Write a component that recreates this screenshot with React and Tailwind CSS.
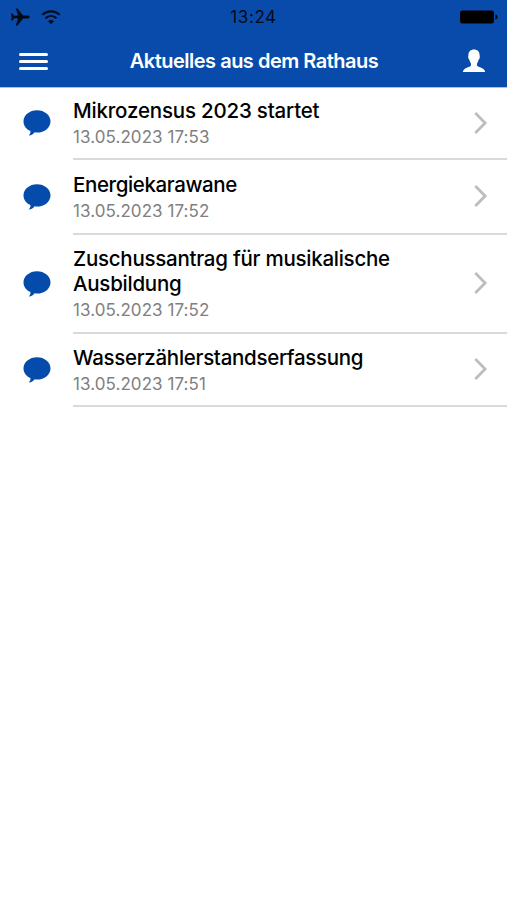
import React from 'react';

const messages = [
  { title: 'Mikrozensus 2023 startet', date: '13.05.2023 17:53', height: 'h-[72px]', spacing: 'tracking-[-0.19px]', padding: 'pt-[10px]' },
  { title: 'Energiekarawane', date: '13.05.2023 17:52', height: 'h-[75px]', spacing: 'tracking-[-0.39px]', padding: 'pt-[12px]' },
  { title: 'Zuschussantrag für musikalische Ausbildung', date: '13.05.2023 17:52', height: 'h-[99px]', spacing: 'tracking-[-0.25px]', padding: 'pt-[11px]' },
  { title: 'Wasserzählerstandserfassung', date: '13.05.2023 17:51', height: 'h-[73px]', spacing: 'tracking-[-0.3px]', padding: 'pt-[11px]' },
];

const PlaneIcon = () => (
  <svg className="w-[20px] h-[18px]" viewBox="0 0 20 18" fill="currentColor">
    <path d="M19.8 9c0-.9-1-1.500-2.500-1.500h-4.200L7.500.4H5.700l2.600 7.100-4.100.3L2.400 5.400H1L1.800 9 1 12.600h1.400l1.800-2.400 4.100.3-2.600 7.100h1.800l5.600-7.100h4.200c1.500 0 2.500-.6 2.500-1.500z" />
  </svg>
);

const WifiIcon = () => (
  <svg className="w-[20px] h-[15px]" viewBox="0 0 20 15" fill="none" stroke="currentColor" strokeWidth="2.2">
    <path d="M1.300 4.800C6.300.1 13.700.1 18.700 4.800" />
    <path d="M4.500 8.300c3.300-3.100 7.700-3.100 11 0" />
    <path d="M10 14.200 7 11.200c1.700-1.700 4.300-1.700 6 0z" fill="currentColor" stroke="none" />
  </svg>
);

const BatteryIcon = () => (
  <svg className="w-[40px] h-[16px]" viewBox="0 0 40 16" fill="currentColor">
    <rect x="1" y="1.500" width="34" height="13" rx="2.500" />
    <path d="M36.500 5.500c2.700.5 2.700 4.500 0 5z" />
  </svg>
);

const PersonIcon = () => (
  <svg className="w-[24px] h-[24px]" viewBox="0 0 24 24" fill="currentColor">
    <path d="M12 .6c3.400 0 5.600 2.200 5.600 5.500 0 1 .3 1.700.2 2.600-.1.800-.7 1-1 1.900-.4 1.500-1.100 2.500-1.500 3.300-.4.900-.5 2.600.1 3.200 1.200 1.200 4.100 1.500 5.700 2.600 1.200.8 1.900 1.900 2 3.200H.9c.1-1.300.8-2.400 2-3.200 1.600-1.100 4.500-1.400 5.700-2.600.6-.6.5-2.300.1-3.200-.4-.8-1.100-1.800-1.500-3.300-.3-.9-.9-1.100-1-1.900-.1-.9.2-1.600.2-2.600C6.400 2.800 8.600.6 12 .6z" />
  </svg>
);

const BubbleIcon = () => (
  <svg className="w-[28px] h-[26px] shrink-0" viewBox="0 0 28 26" fill="currentColor">
    <path d="M14 .3C6.500.3.500 5.200.500 11.400c0 4.100 2.700 7.700 6.900 9.600.3 1.700-.5 3.300-1.600 4.600 2.600-.1 4.700-1.300 5.800-3.300.8.1 1.600.2 2.400.2 7.500 0 13.500-4.900 13.500-11.100S21.500.3 14 .3z" />
  </svg>
);

const ChevronIcon = () => (
  <svg className="w-[16px] h-[24px] shrink-0" viewBox="0 0 16 24" fill="none" stroke="currentColor" strokeWidth="2.800">
    <path d="m2.300 2 9.800 10-9.800 10" />
  </svg>
);

const MessageRow = ({ title, date, height, spacing, padding }) => (
  <li className={`flex items-center pl-[23px] ${height}`}>
    <span className="pb-[2px] text-[#054bab]">
      <BubbleIcon />
    </span>
    <div className="ml-[22px] flex h-full flex-1 items-center justify-between border-b-2 border-[#d9d9d9] pr-[18px]">
      <div className={`w-[340px] self-start ${padding}`}>
        <h2 className={`text-[20.5px] leading-[25px] font-medium text-black ${spacing}`}>{title}</h2>
        <p className="pt-px text-[17px] leading-[26px] tracking-[0.07px] text-[#808080]">{date}</p>
      </div>
      <span className="pb-px text-[#bdbdbd]">
        <ChevronIcon />
      </span>
    </div>
  </li>
);

const App = () => {
  return (
    <div className="min-h-[900px] w-[507px] bg-white font-['Inter','Liberation_Sans',sans-serif]">
      <header className="h-[88px] border-b border-[#a9c2e3] bg-[#084bab]">
        {/* Status bar */}
        <div className="grid h-[34px] grid-cols-3 items-center pr-[8px] pl-[10px] text-[#020a18]">
          <div className="flex items-center gap-[11px]">
            <PlaneIcon />
            <WifiIcon />
          </div>
          <span className="pr-[2px] text-center text-[17px] leading-[34px] tracking-[0.6px]">13:24</span>
          <div className="flex justify-end text-black">
            <BatteryIcon />
          </div>
        </div>

        {/* Navigation */}
        <div className="flex h-[53px] items-center justify-between pr-[21px] pl-[19px] text-white">
          <button className="flex w-[29px] flex-col gap-[4px] pt-px" aria-label="Menü">
            <span className="h-[3px] w-full rounded-full bg-white"></span>
            <span className="h-[3px] w-full rounded-full bg-white"></span>
            <span className="h-[3px] w-full rounded-full bg-white"></span>
          </button>
          <h1 className="pr-[2px] text-[20px] font-semibold tracking-[-0.5px]">Aktuelles aus dem Rathaus</h1>
          <button aria-label="Profil">
            <PersonIcon />
          </button>
        </div>
      </header>

      <ul>
        {messages.map((message) => (
          <MessageRow key={message.title} {...message} />
        ))}
      </ul>
    </div>
  );
};

export default App;
